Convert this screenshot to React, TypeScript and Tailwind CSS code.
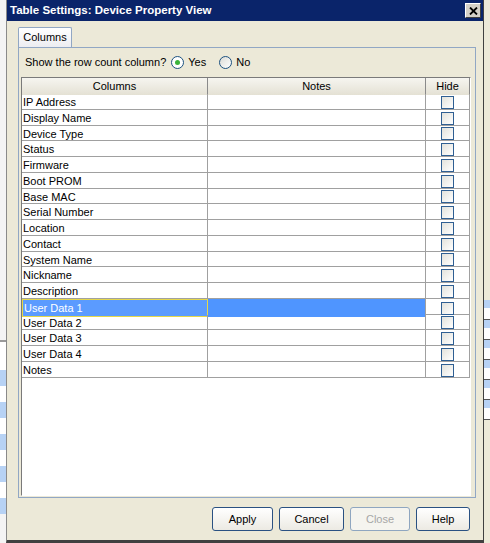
import React from "react";

const ROWS = [
  "IP Address",
  "Display Name",
  "Device Type",
  "Status",
  "Firmware",
  "Boot PROM",
  "Base MAC",
  "Serial Number",
  "Location",
  "Contact",
  "System Name",
  "Nickname",
  "Description",
  "User Data 1",
  "User Data 2",
  "User Data 3",
  "User Data 4",
  "Notes",
];

const SELECTED = 13;

function Check() {
  return (
    <span className="block h-[13px] w-[13px] border border-[#2f5f93] bg-gradient-to-br from-[#e2e2dc] to-white" />
  );
}

function Button({ label, disabled }: { label: string; disabled?: boolean }) {
  return (
    <button
      className={
        disabled
          ? "h-[24px] rounded-[3px] border border-[#8fa6c0] bg-[#f5f4ef] text-[#a6a6a6]"
          : "h-[24px] rounded-[3px] border border-[#2a5182] bg-gradient-to-b from-white to-[#eceae3] text-black"
      }
    >
      {label}
    </button>
  );
}

export default function App() {
  return (
    <div
      className="flex h-[543px] w-[490px] overflow-hidden bg-[#f4f4f4] text-[11px] text-black"
      style={{ fontFamily: '"Liberation Sans", Arial, sans-serif' }}
    >
      {/* background app, left edge */}
      <div className="flex w-[6px] flex-col pt-[340px]">
        <div className="h-[2px] border-y border-[#9a9a9a]" />
        <div className="h-[28px] bg-white" />
        {[0, 1, 2, 3, 4, 5, 6, 7, 8].map((i) => (
          <div key={i} className={i % 2 ? "h-[16px] bg-white" : "h-[16px] bg-[#b7d2f4]"} />
        ))}
      </div>

      {/* dialog */}
      <div className="flex w-[478px] flex-col border-x border-b-[3px] border-l-[#8a8a8a] border-r-[#404040] border-b-[#404040] bg-[#ece9d8]">
        <div className="flex h-[21px] items-center justify-between bg-[#0a246a] pl-[3px] pr-[2px]">
          <span className="text-[11.5px] font-bold text-white">
            Table Settings: Device Property View
          </span>
          <span className="flex h-[15px] w-[16px] items-center justify-center border border-b-[#404040] border-l-white border-r-[#404040] border-t-white bg-[#d4d0c8]">
            <svg width="9" height="8" viewBox="0 0 9 8">
              <path d="M1 0.5 L8 7.5 M8 0.5 L1 7.5" stroke="black" strokeWidth="1.8" />
            </svg>
          </span>
        </div>

        <div className="flex flex-1 flex-col pl-[11px] pr-[7px] pt-[6px]">
          <div className="flex">
            <div className="flex h-[20px] w-[54px] items-center justify-center rounded-t-[2px] border border-b-0 border-[#91a7c4] bg-gradient-to-b from-white to-[#ecedf1]">
              Columns
            </div>
          </div>
          <div className="flex h-[451px] flex-col border border-[#91a7c4] bg-[#ece9d8] pl-[2px] pr-[4px] pt-[5px]">
            <div className="flex h-[18px] items-center gap-[5px] pl-[4px]">
              <span>Show the row count column?</span>
              <span className="flex items-center gap-[4px]">
                <span className="flex h-[13px] w-[13px] items-center justify-center rounded-full border border-[#1c5180] bg-white">
                  <span className="h-[5px] w-[5px] rounded-full bg-[#3bb33b]" />
                </span>
                Yes
              </span>
              <span className="ml-[8px] flex items-center gap-[4px]">
                <span className="h-[13px] w-[13px] rounded-full border border-[#1c5180] bg-gradient-to-br from-[#dcdcd6] to-white" />
                No
              </span>
            </div>

            <div className="mt-[6px] flex h-[419px] flex-col border border-b-white border-l-[#7a7a7a] border-r-white border-t-[#7a7a7a] bg-white">
              <div className="grid h-[16px] grid-cols-[186px_218px_44px] border-b border-[#8a8a8a]">
                {["Columns", "Notes", "Hide"].map((h) => (
                  <div
                    key={h}
                    className="flex items-center justify-center border-r border-[#8a8a8a] bg-gradient-to-b from-[#f6f5f0] to-[#e4e1d4]"
                  >
                    {h}
                  </div>
                ))}
              </div>
              {ROWS.map((r, i) => {
                const sel = i === SELECTED;
                return (
                  <div
                    key={r}
                    className="grid h-[15.75px] grid-cols-[186px_218px_44px] border-b border-[#a0a0a0]"
                  >
                    <div
                      className={
                        sel
                          ? "flex items-center border border-[#e5d84a] bg-[#5b9bff] pl-[1px] text-white"
                          : "flex items-center border-r border-[#a0a0a0] pl-[1px]"
                      }
                    >
                      {r}
                    </div>
                    <div className={sel ? "border-r border-[#a0a0a0] bg-[#4f95ff]" : "border-r border-[#a0a0a0]"} />
                    <div className="flex items-center justify-center border-r border-[#a0a0a0]">
                      <Check />
                    </div>
                  </div>
                );
              })}
            </div>
          </div>

          <div className="mt-[9px] flex justify-end pr-[6px]">
            <div className="grid grid-cols-[61px_65px_60px_54px] gap-[6px]">
              <Button label="Apply" />
              <Button label="Cancel" />
              <Button label="Close" disabled />
              <Button label="Help" />
            </div>
          </div>
        </div>
      </div>

      {/* background app, right edge */}
      <div className="flex flex-1 flex-col bg-[#ece9d8] pt-[300px]">
        {[0, 1, 2, 3, 4, 5, 6, 7, 8, 9, 10, 11].map((i) => (
          <div key={i} className={i % 2 ? "h-[12px] border-b border-[#555] bg-white" : "h-[8px] bg-[#b7d2f4]"} />
        ))}
      </div>
    </div>
  );
}
